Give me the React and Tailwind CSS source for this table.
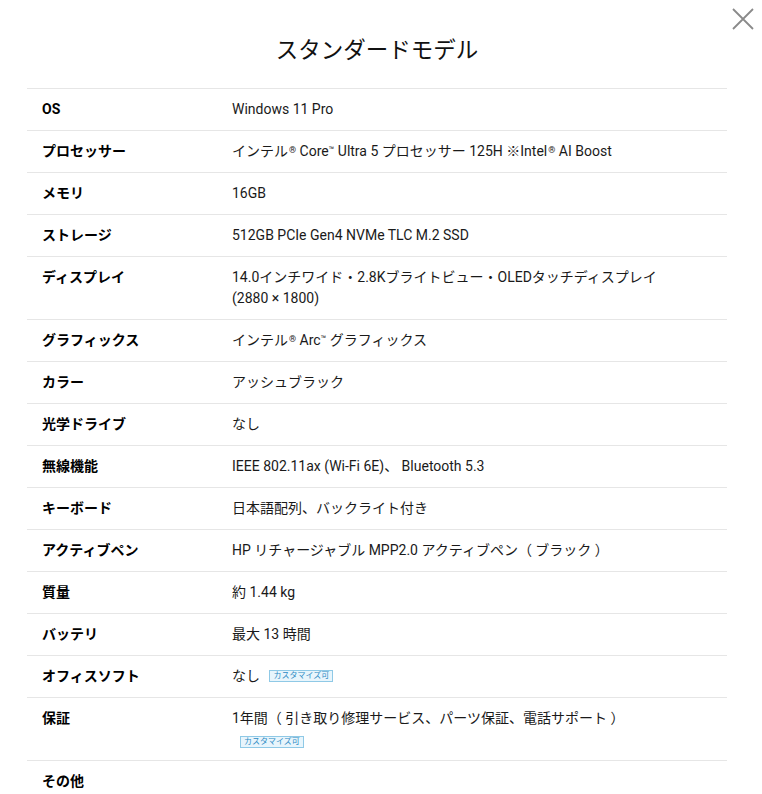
import React from "react";

const font = {
  fontFamily: '"Roboto", "Noto Sans CJK JP", sans-serif',
};

function Badge({ className = "" }) {
  return (
    <span
      className={`inline-flex items-center h-[12px] px-[3px] border border-[#8fc9e6] bg-[#e8f5fc] text-[#2d8bc4] text-[8px] leading-none align-middle ${className}`}
    >
      カスタマイズ可
    </span>
  );
}

const R = () => <sup className="text-[9px] ml-[1px] -top-[3px]">®</sup>;
const TM = () => <sup className="text-[9px] -top-[3px]">™</sup>;

const rows = [
  { label: "OS", value: "Windows 11 Pro" },
  {
    label: "プロセッサー",
    value: (
      <>
        インテル<R /> Core<TM /> Ultra 5 プロセッサー 125H ※Intel<R /> AI Boost
      </>
    ),
  },
  { label: "メモリ", value: "16GB" },
  { label: "ストレージ", value: "512GB PCIe Gen4 NVMe TLC M.2 SSD" },
  {
    label: "ディスプレイ",
    value: (
      <>
        14.0インチワイド・2.8Kブライトビュー・OLEDタッチディスプレイ
        <br />
        (2880 × 1800)
      </>
    ),
  },
  {
    label: "グラフィックス",
    value: (
      <>
        インテル<R /> Arc<TM /> グラフィックス
      </>
    ),
  },
  { label: "カラー", value: "アッシュブラック" },
  { label: "光学ドライブ", value: "なし" },
  { label: "無線機能", value: "IEEE 802.11ax (Wi-Fi 6E)、 Bluetooth 5.3" },
  { label: "キーボード", value: "日本語配列、バックライト付き" },
  { label: "アクティブペン", value: "HP リチャージャブル MPP2.0 アクティブペン（ ブラック ）" },
  { label: "質量", value: "約 1.44 kg" },
  { label: "バッテリ", value: "最大 13 時間" },
  {
    label: "オフィスソフト",
    value: (
      <>
        なし <Badge className="ml-[6px] -mt-[2px]" />
      </>
    ),
  },
  {
    label: "保証",
    value: (
      <>
        1年間（ 引き取り修理サービス、パーツ保証、電話サポート ）
        <div className="h-[21px] pt-[2px] pl-[8px]">
          <Badge />
        </div>
      </>
    ),
  },
  { label: "その他", value: "" },
];

export default function App() {
  return (
    <div className="relative w-[762px] min-h-[794px] bg-white text-[#111]" style={font}>
      <button className="absolute top-[8px] left-[732px] w-[22px] h-[22px]">
        <svg width="22" height="22" viewBox="0 0 22 22">
          <path d="M1 1 L21 21 M21 1 L1 21" stroke="#8a8a8a" strokeWidth="1.8" fill="none" />
        </svg>
      </button>

      <div className="ml-[27px] w-[700px] pt-[37px]">
        <h2 className="text-center text-[22.5px] leading-[26px] text-[#111] mb-[25px]">
          スタンダードモデル
        </h2>

        <div>
          {rows.map((r) => (
            <div
              key={r.label}
              className="flex border-t border-[#e6e6e6] py-[10px] text-[14px] leading-[21px]"
            >
              <div className="w-[205px] pl-[15px] font-bold text-black shrink-0">{r.label}</div>
              <div className="flex-1 text-[#1a1a1a]">{r.value}</div>
            </div>
          ))}
        </div>
      </div>
    </div>
  );
}
